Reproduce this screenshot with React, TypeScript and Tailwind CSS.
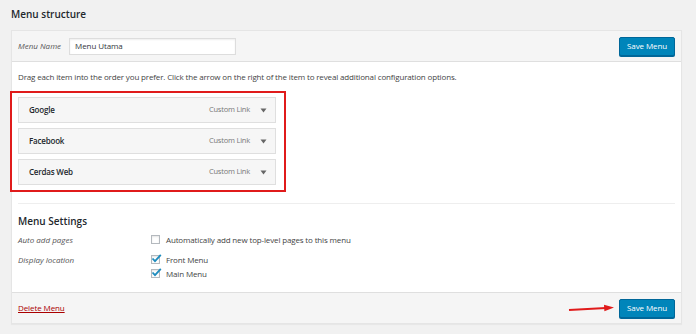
import React from "react";

const font = { fontFamily: '"Open Sans", "Noto Sans", sans-serif' };

function Check({ checked }: { checked?: boolean }) {
  return (
    <span className="relative inline-block h-[9px] w-[9px] shrink-0 border border-[#b4b9be] bg-white shadow-[inset_0_1px_2px_rgba(0,0,0,0.1)]">
      {checked && (
        <svg className="absolute left-[-1px] top-[-3px]" width="11" height="11" viewBox="0 0 11 11">
          <path d="M1.5 5.5 L4 8.2 L9.8 1.8" fill="none" stroke="#1e8cbe" strokeWidth="1.8" />
        </svg>
      )}
    </span>
  );
}

function Item({ name }: { name: string }) {
  return (
    <div className="flex h-[26px] w-[258px] items-center border border-[#dfdfdf] bg-[#f6f6f6] pl-[10px] pr-[8px]">
      <span className="text-[8px] font-semibold tracking-[-0.2px] text-[#23282d]">{name}</span>
      <span className="ml-auto text-[7.5px] tracking-[-0.2px] text-[#777]">Custom Link</span>
      <svg className="ml-[10px]" width="7" height="5" viewBox="0 0 7 5">
        <path d="M0.5 0.5 L6.5 0.5 L3.5 4.5 Z" fill="#666" />
      </svg>
    </div>
  );
}

function SaveButton() {
  return (
    <button className="flex h-[19px] w-[56px] items-center justify-center rounded-[2px] border border-[#006799] bg-[#0085ba] text-[8px] tracking-[-0.1px] text-white shadow-[0_1px_0_#006799]">
      Save Menu
    </button>
  );
}

export default function App() {
  return (
    <div className="h-[334px] w-[696px] overflow-hidden bg-[#f1f1f1] text-[#444]" style={font}>
      <div className="pl-[11px] pt-[5px]">
        <h2 className="h-[25px] text-[10px] font-semibold leading-[18px] text-[#23282d]">Menu structure</h2>
        <div className="w-[671px] border border-[#e5e5e5] bg-white shadow-[0_1px_1px_rgba(0,0,0,0.04)]">
          {/* header */}
          <div className="flex h-[31px] items-center border-b border-[#dfdfdf] bg-[#f5f5f5] pl-[6px] pr-[6px]">
            <span className="text-[8px] italic text-[#555]">Menu Name</span>
            <div className="ml-[8px] flex h-[17px] w-[167px] items-center border border-[#ddd] bg-white pl-[5px] text-[8px] tracking-[-0.1px] text-[#32373c] shadow-[inset_0_1px_2px_rgba(0,0,0,0.07)]">
              Menu Utama
            </div>
            <div className="ml-auto">
              <SaveButton />
            </div>
          </div>
          {/* body */}
          <div className="h-[230px] px-[6px]">
            <p className="pt-[9px] text-[8px] leading-[12px] tracking-[-0.15px] text-[#444]">
              Drag each item into the order you prefer. Click the arrow on the right of the item to reveal additional configuration options.
            </p>
            <div className="relative mt-[14px] flex w-[258px] flex-col gap-[5px]">
              <Item name="Google" />
              <Item name="Facebook" />
              <Item name="Cerdas Web" />
              <div className="pointer-events-none absolute left-[-8px] right-[-10px] top-[-6px] bottom-[-7px] border-2 border-[#e01b1b]" />
            </div>
            <div className="mt-[18px] border-t border-[#eee]" />
            <h3 className="mt-[9px] text-[10px] font-semibold leading-[16px] text-[#23282d]">Menu Settings</h3>
            <div className="mt-[4px] flex h-[13px] items-center">
              <span className="w-[133px] text-[8px] italic text-[#555]">Auto add pages</span>
              <Check />
              <span className="ml-[6px] text-[8px] tracking-[-0.15px] text-[#444]">Automatically add new top-level pages to this menu</span>
            </div>
            <div className="mt-[7px] flex">
              <span className="w-[133px] text-[8px] italic leading-[13px] text-[#555]">Display location</span>
              <div className="flex flex-col gap-[1px]">
                <div className="flex h-[13px] items-center">
                  <Check checked />
                  <span className="ml-[6px] text-[8px] tracking-[-0.15px] text-[#444]">Front Menu</span>
                </div>
                <div className="flex h-[13px] items-center">
                  <Check checked />
                  <span className="ml-[6px] text-[8px] tracking-[-0.15px] text-[#444]">Main Menu</span>
                </div>
              </div>
            </div>
          </div>
          {/* footer */}
          <div className="relative flex h-[31px] items-center border-t border-[#dfdfdf] bg-[#f5f5f5] px-[6px]">
            <a className="text-[8px] tracking-[-0.1px] text-[#a00] underline">Delete Menu</a>
            <div className="ml-auto">
              <SaveButton />
            </div>
            <svg className="absolute left-[556px] top-[10px]" width="48" height="10" viewBox="0 0 48 10">
              <path d="M1 7 L38 5" stroke="#e01b1b" strokeWidth="1.8" />
              <path d="M36 1.8 L46 4.6 L36.4 8.2 Z" fill="#e01b1b" />
            </svg>
          </div>
        </div>
      </div>
    </div>
  );
}
